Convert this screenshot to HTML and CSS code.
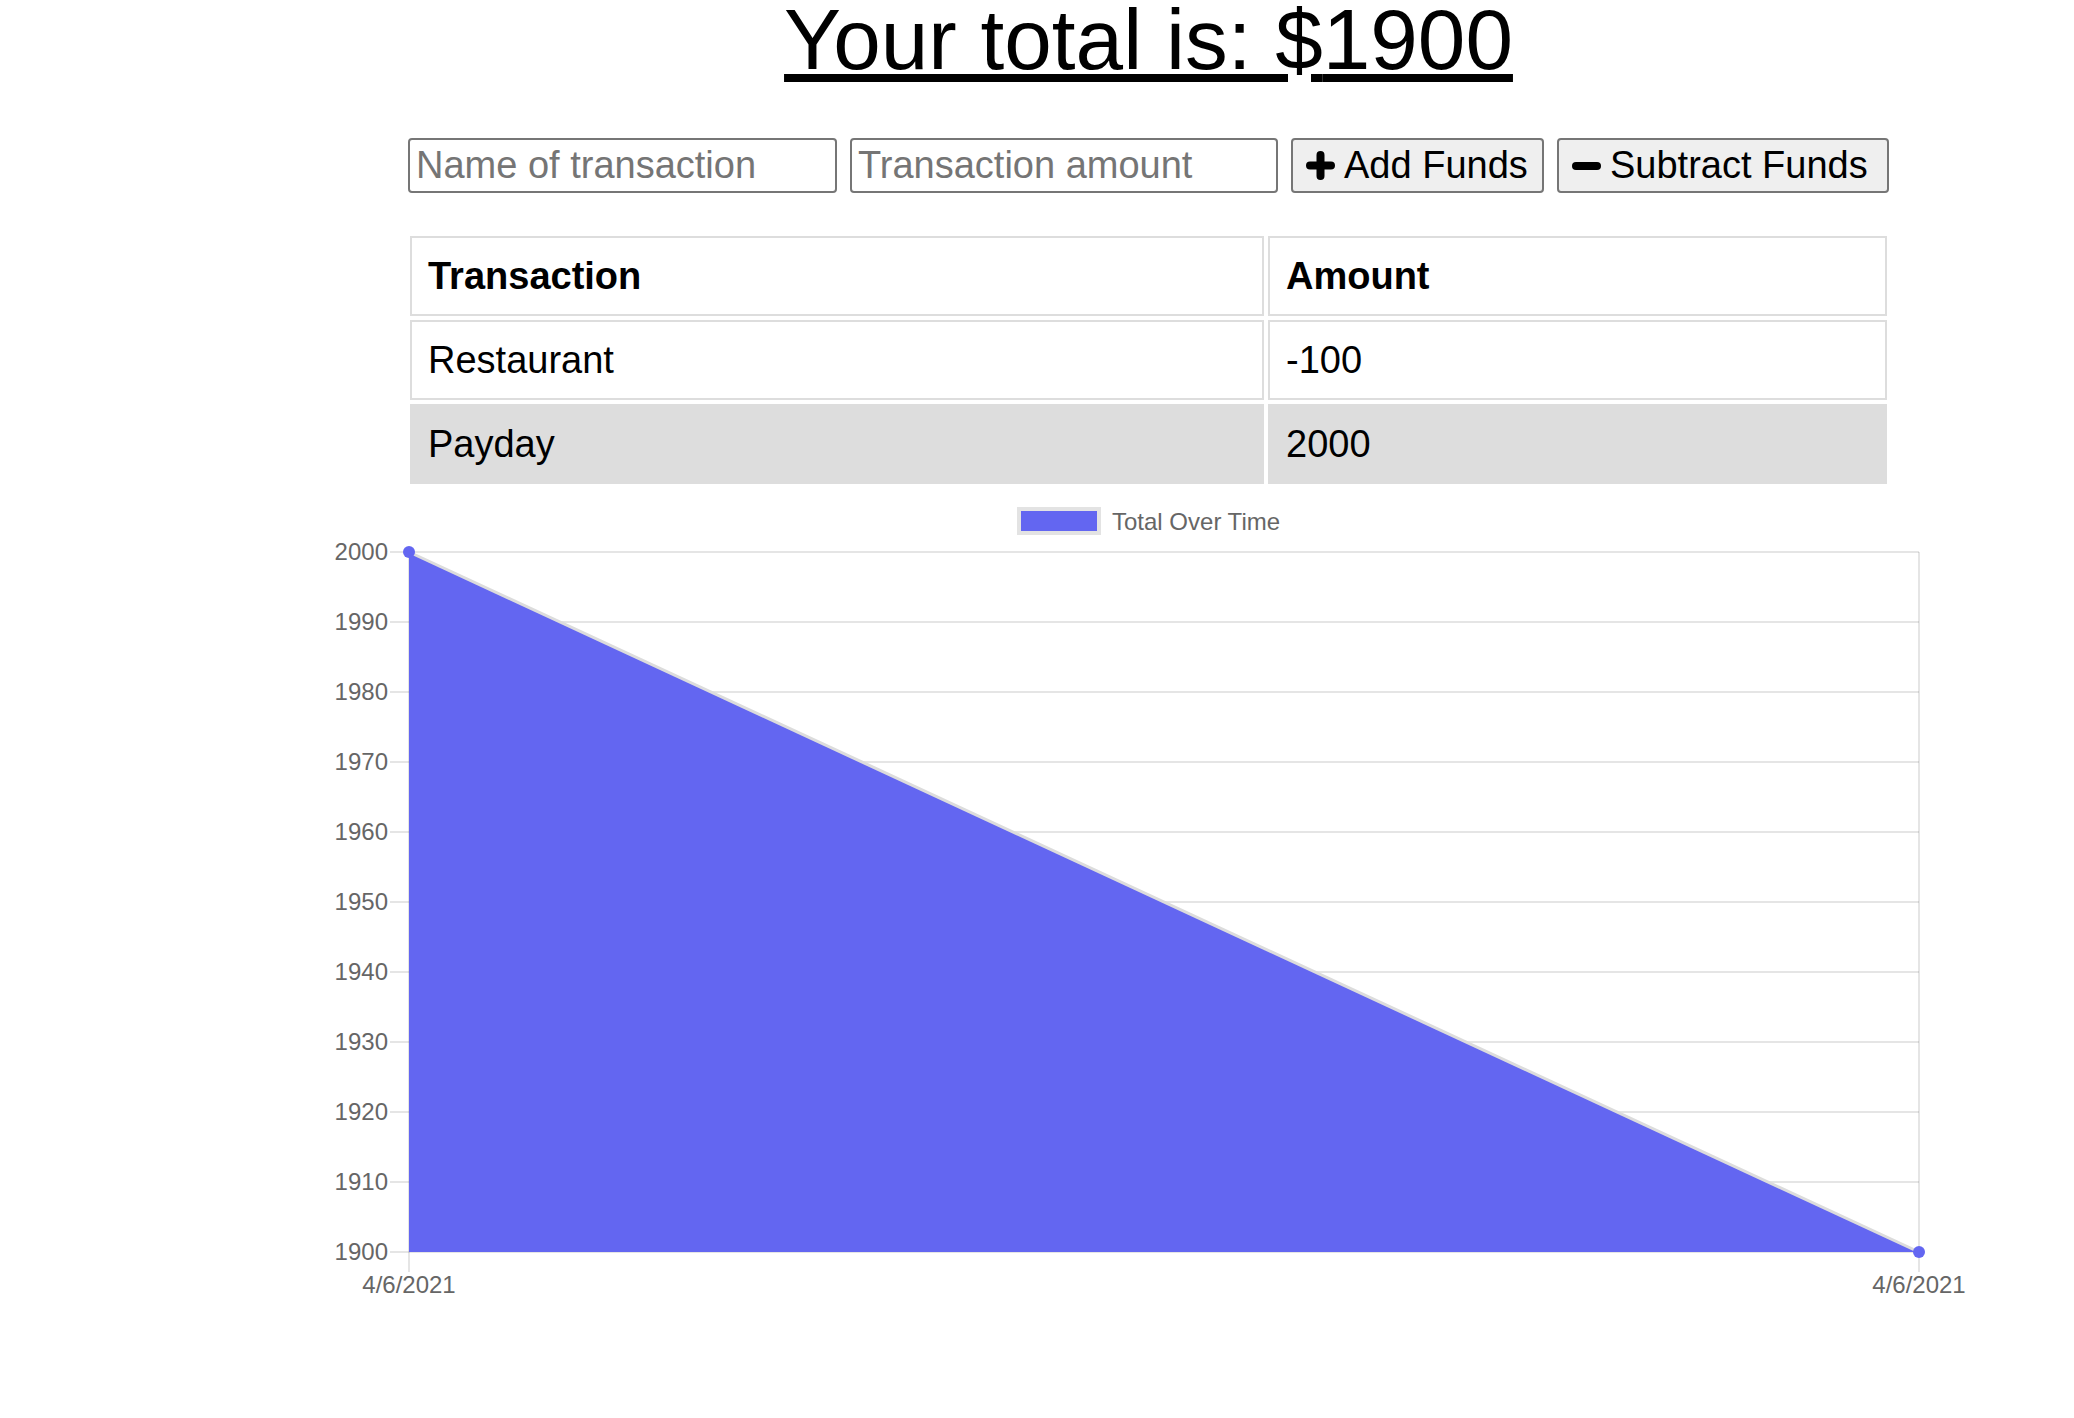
FILE: index.html
```html
<!DOCTYPE html>
<html lang="en">
<head>
	<meta charset="utf-8">
	<title>Budget Tracker</title>
	<link rel="stylesheet" href="styles.css">
</head>
<body>
	<div class="page">
		<h1 class="total">Your total is: $<span id="total">1900</span></h1>

		<div class="form">
			<input type="text" class="field" placeholder="Name of transaction">
			<input type="number" class="field" placeholder="Transaction amount">
			<button class="btn btn-add">
				<svg class="icon" width="29" height="29" viewBox="0 0 29 29"><path d="M4 14.5H25M14.5 4V25"/></svg>
				<span>Add Funds</span>
			</button>
			<button class="btn btn-sub">
				<svg class="icon" width="29" height="29" viewBox="0 0 29 29"><path d="M4 15H25"/></svg>
				<span>Subtract Funds</span>
			</button>
		</div>

		<table class="transactions">
			<thead>
				<tr>
					<th class="col-name">Transaction</th>
					<th>Amount</th>
				</tr>
			</thead>
			<tbody>
				<tr>
					<td>Restaurant</td>
					<td>-100</td>
				</tr>
				<tr>
					<td>Payday</td>
					<td>2000</td>
				</tr>
			</tbody>
		</table>

		<div class="chart">
			<svg width="1652" height="830" viewBox="0 0 1652 830">
				<!-- legend -->
				<rect class="area" x="697" y="21" width="80" height="24" stroke="#e3e3e3" stroke-width="4"/>
				<text class="legend-label" x="790" y="42">Total Over Time</text>

				<!-- grid -->
				<g class="grid">
					<line x1="68" y1="64" x2="1597" y2="64"/>
					<line x1="68" y1="134" x2="1597" y2="134"/>
					<line x1="68" y1="204" x2="1597" y2="204"/>
					<line x1="68" y1="274" x2="1597" y2="274"/>
					<line x1="68" y1="344" x2="1597" y2="344"/>
					<line x1="68" y1="414" x2="1597" y2="414"/>
					<line x1="68" y1="484" x2="1597" y2="484"/>
					<line x1="68" y1="554" x2="1597" y2="554"/>
					<line x1="68" y1="624" x2="1597" y2="624"/>
					<line x1="68" y1="694" x2="1597" y2="694"/>
					<line x1="68" y1="764" x2="1597" y2="764"/>
					<line x1="87" y1="64" x2="87" y2="784"/>
					<line x1="1597" y1="64" x2="1597" y2="784"/>
				</g>

				<!-- y axis -->
				<g class="tick-y">
					<text x="66" y="72">2000</text>
					<text x="66" y="142">1990</text>
					<text x="66" y="212">1980</text>
					<text x="66" y="282">1970</text>
					<text x="66" y="352">1960</text>
					<text x="66" y="422">1950</text>
					<text x="66" y="492">1940</text>
					<text x="66" y="562">1930</text>
					<text x="66" y="632">1920</text>
					<text x="66" y="702">1910</text>
					<text x="66" y="772">1900</text>
				</g>

				<!-- x axis -->
				<g class="tick-x">
					<text x="87" y="805">4/6/2021</text>
					<text x="1597" y="805">4/6/2021</text>
				</g>

				<!-- data -->
				<polygon class="area" points="87,64 1597,764 87,764"/>
				<line class="trend" x1="87" y1="64" x2="1597" y2="764"/>
				<circle class="area" cx="87" cy="64" r="6"/>
				<circle class="area" cx="1597" cy="764" r="6"/>
			</svg>
		</div>
	</div>
</body>
</html>
```

FILE: styles.css
```css
body {
	margin: 0;
	background: white;
	color: black;
	font-family: "Liberation Sans", Arial, sans-serif;
	overflow: hidden;
}
.page {
	width: 1481px;
	margin-left: 408px;
}
.total {
	margin: 0;
	padding-top: 2px;
	font-size: 85.5px;
	font-weight: normal;
	line-height: 75px;
	text-align: center;
	text-decoration: underline;
}
.form {
	display: flex;
	gap: 13px;
	margin-top: 61px;
}
.field {
	box-sizing: border-box;
	width: 428px;
	height: 55px;
	margin: 0;
	padding: 0 6px;
	border: 2px solid #767676;
	border-radius: 4px;
	font-family: inherit;
	font-size: 38px;
}
.field:first-child {
	width: 429px;
}
.field::placeholder {
	color: #757575;
}
.btn {
	box-sizing: border-box;
	display: flex;
	align-items: center;
	gap: 9px;
	height: 55px;
	margin: 0;
	padding: 0 0 0 13px;
	border: 2px solid #767676;
	border-radius: 4px;
	background: #efefef;
	color: black;
	font-family: inherit;
	font-size: 38px;
}
.btn-add {
	width: 253px;
}
.btn-sub {
	width: 332px;
}
.icon {
	flex: none;
}
.icon path {
	fill: none;
	stroke: black;
	stroke-width: 8;
	stroke-linecap: round;
}
.transactions {
	width: 1485px;
	margin: 39px 0 0 -2px;
	border-spacing: 4px;
	table-layout: fixed;
	font-size: 38px;
}
.transactions th,
.transactions td {
	padding: 16px;
	border: 2px solid #dddddd;
	line-height: 44px;
	text-align: left;
}
.transactions .col-name {
	width: 854px;
	box-sizing: border-box;
}
.transactions tbody tr:nth-child(even) {
	background: #dddddd;
}
.chart {
	margin-left: -86px;
	height: 830px;
}
.chart svg {
	display: block;
	font-family: "Liberation Sans", Arial, sans-serif;
	font-size: 24px;
}
.area {
	fill: #6366f1;
}
.trend {
	stroke: #dcdcdc;
	stroke-width: 3;
}
.grid line {
	stroke: rgba(0, 0, 0, 0.1);
	stroke-width: 2;
}
.tick-y text,
.tick-x text,
.legend-label {
	fill: #666666;
}
.tick-y text {
	text-anchor: end;
}
.tick-x text {
	text-anchor: middle;
}
```
